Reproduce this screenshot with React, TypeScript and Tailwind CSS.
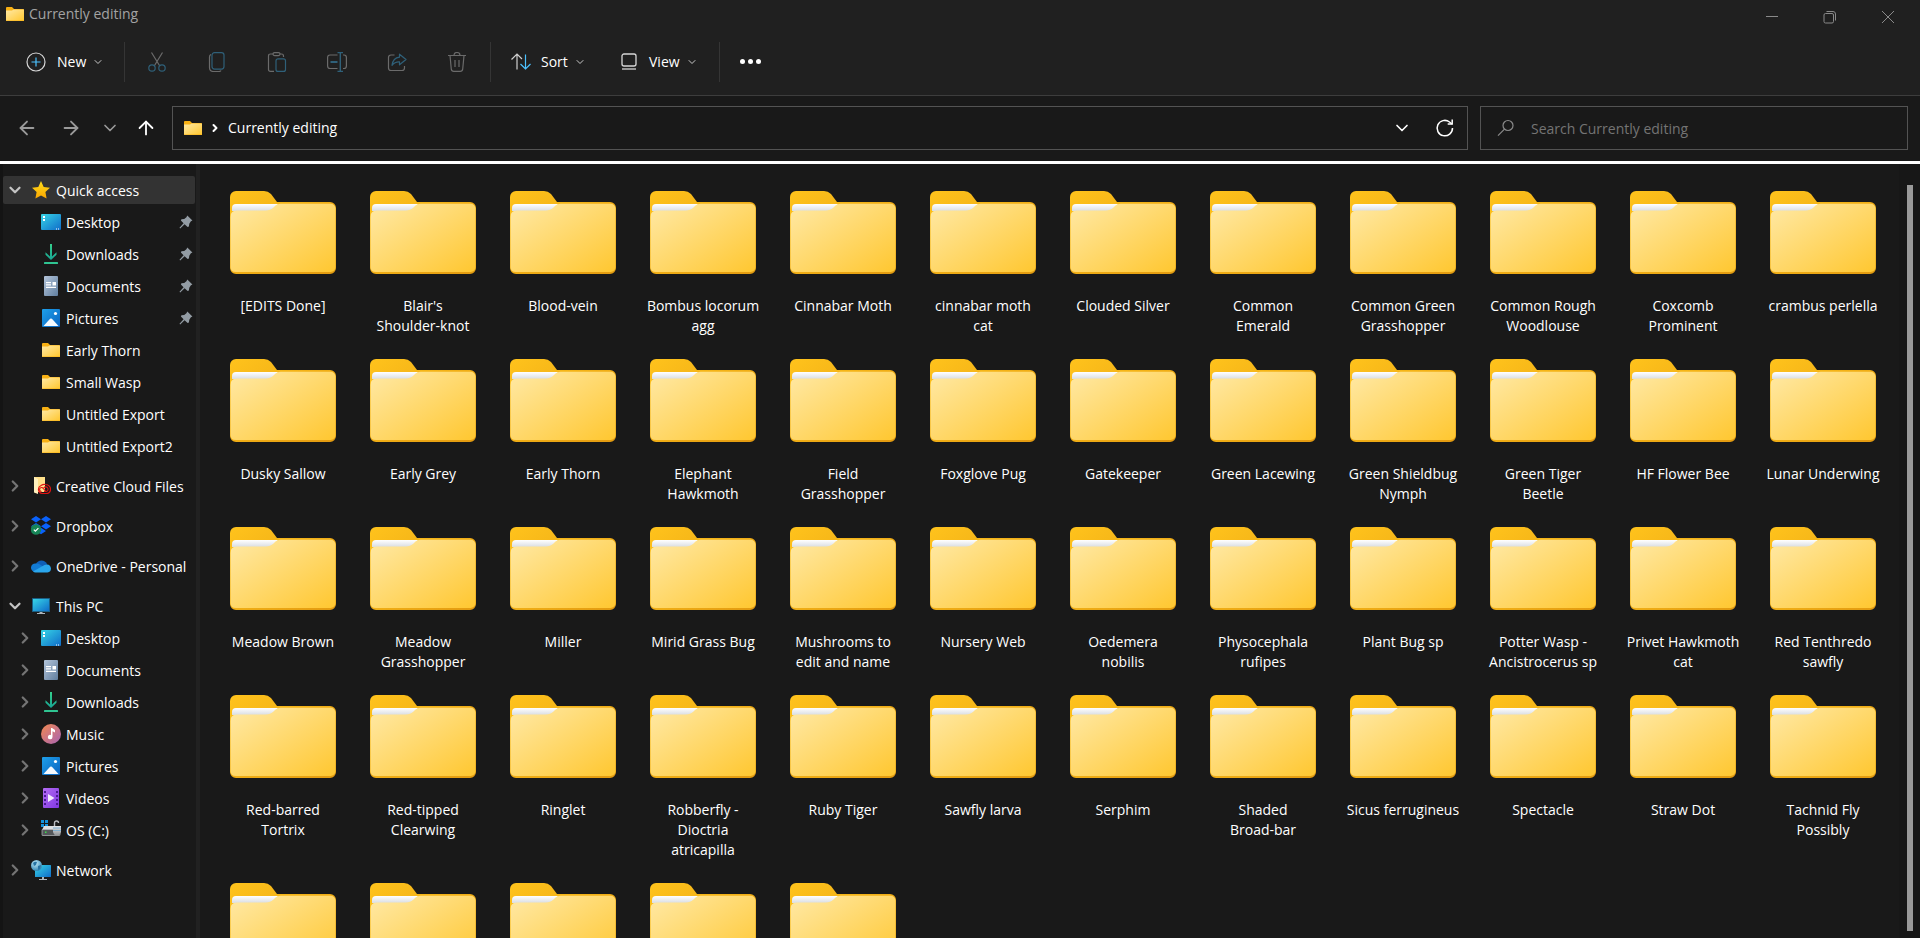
import {
  ArrowLeft,
  ArrowRight,
  ArrowUp,
  ChevronDown,
  ChevronRight,
} from "lucide-react";
import type { ReactNode } from "react";

const folders = [
  "[EDITS Done]",
  "Blair's Shoulder-knot",
  "Blood-vein",
  "Bombus locorum agg",
  "Cinnabar Moth",
  "cinnabar moth cat",
  "Clouded Silver",
  "Common Emerald",
  "Common Green Grasshopper",
  "Common Rough Woodlouse",
  "Coxcomb Prominent",
  "crambus perlella",
  "Dusky Sallow",
  "Early Grey",
  "Early Thorn",
  "Elephant Hawkmoth",
  "Field Grasshopper",
  "Foxglove Pug",
  "Gatekeeper",
  "Green Lacewing",
  "Green Shieldbug Nymph",
  "Green Tiger Beetle",
  "HF Flower Bee",
  "Lunar Underwing",
  "Meadow Brown",
  "Meadow Grasshopper",
  "Miller",
  "Mirid Grass Bug",
  "Mushrooms to edit and name",
  "Nursery Web",
  "Oedemera nobilis",
  "Physocephala rufipes",
  "Plant Bug sp",
  "Potter Wasp - Ancistrocerus sp",
  "Privet Hawkmoth cat",
  "Red Tenthredo sawfly",
  "Red-barred Tortrix",
  "Red-tipped Clearwing",
  "Ringlet",
  "Robberfly - Dioctria atricapilla",
  "Ruby Tiger",
  "Sawfly larva",
  "Serphim",
  "Shaded Broad-bar",
  "Sicus ferrugineus",
  "Spectacle",
  "Straw Dot",
  "Tachnid Fly Possibly",
  "",
  "",
  "",
  "",
  "",
];

/* ICONS */

function Gradients() {
  return (
    <svg className="absolute h-0 w-0" aria-hidden="true">
      <defs>
        <linearGradient id="folderFront" x1="0" y1="0" x2="1" y2="1">
          <stop offset="0" stopColor="#ffe9a6" />
          <stop offset="1" stopColor="#ffc730" />
        </linearGradient>
        <linearGradient id="folderBack" x1="0" y1="0" x2="1" y2="1">
          <stop offset="0" stopColor="#ffc31c" />
          <stop offset="1" stopColor="#e29a10" />
        </linearGradient>
        <linearGradient id="paper" x1="0" y1="0" x2="0" y2="1">
          <stop offset="0" stopColor="#ffffff" />
          <stop offset="1" stopColor="#d9dde2" />
        </linearGradient>
        <linearGradient id="screen" x1="0" y1="0" x2="1" y2="1">
          <stop offset="0" stopColor="#37d5e6" />
          <stop offset="1" stopColor="#0f6cc9" />
        </linearGradient>
        <linearGradient id="picture" x1="0" y1="0" x2="1" y2="1">
          <stop offset="0" stopColor="#1ea0ea" />
          <stop offset="1" stopColor="#0a63c0" />
        </linearGradient>
        <linearGradient id="doc" x1="0" y1="0" x2="1" y2="1">
          <stop offset="0" stopColor="#b4c5da" />
          <stop offset="1" stopColor="#607e9f" />
        </linearGradient>
        <linearGradient id="music" x1="0" y1="0" x2="1" y2="1">
          <stop offset="0" stopColor="#f3894f" />
          <stop offset="1" stopColor="#a763b5" />
        </linearGradient>
        <linearGradient id="video" x1="0" y1="0" x2="1" y2="1">
          <stop offset="0" stopColor="#b46cf5" />
          <stop offset="1" stopColor="#8037e0" />
        </linearGradient>
        <linearGradient id="download" x1="0" y1="0" x2="0" y2="1">
          <stop offset="0" stopColor="#35cf8c" />
          <stop offset="1" stopColor="#17a695" />
        </linearGradient>
        <linearGradient id="star" x1="0" y1="0" x2="0" y2="1">
          <stop offset="0" stopColor="#ffdc1a" />
          <stop offset="1" stopColor="#f9a602" />
        </linearGradient>
        <linearGradient id="drive" x1="0" y1="0" x2="0" y2="1">
          <stop offset="0" stopColor="#e4e6e8" />
          <stop offset="1" stopColor="#8a8d90" />
        </linearGradient>
        <radialGradient id="globe" cx="0.4" cy="0.3" r="0.7">
          <stop offset="0" stopColor="#c4ecf8" />
          <stop offset="1" stopColor="#3286b4" />
        </radialGradient>
      </defs>
    </svg>
  );
}

function BigFolder() {
  return (
    <svg width="106" height="84" viewBox="0 0 106 84" aria-hidden="true">
      <path
        d="M0 6a6 6 0 0 1 6-6h28q4 0 7 3l6 8h53a6 6 0 0 1 6 6V77a6 6 0 0 1-6 6H6a6 6 0 0 1-6-6Z"
        fill="url(#folderBack)"
      />
      <path d="M2 17a4 4 0 0 1 4-4h42l-5 7H2Z" fill="url(#paper)" />
      <path
        d="M.5 26q0-6.500 6-6.500h29q5 0 8-3l2-2q2-1.700 5-1.700h50a5 5 0 0 1 5 5V76a5 5 0 0 1-5 5H6q-5.500 0-5.500-5Z"
        fill="url(#folderFront)"
      />
    </svg>
  );
}

function FolderIcon() {
  return (
    <svg width="20" height="20" viewBox="0 0 20 20" aria-hidden="true">
      <path d="M1 4a1 1 0 0 1 1-1h5l2 2h9a1 1 0 0 1 1 1v11H1Z" fill="#f8b013" />
      <path d="M1 6.500h6L8.500 5.500H19V16a.6.6 0 0 1-.6.6H1.600A.6.600 0 0 1 1 16Z" fill="url(#folderFront)" />
    </svg>
  );
}

function StarIcon() {
  return (
    <svg width="20" height="20" viewBox="0 0 20 20" aria-hidden="true">
      <path
        d="m10 1 2.700 5.900 6.300.8-4.600 4.400 1.200 6.400L10 15.400l-5.600 3.100 1.200-6.400L1 7.700l6.300-.8Z"
        fill="url(#star)"
      />
    </svg>
  );
}

function DesktopIcon() {
  return (
    <svg width="20" height="20" viewBox="0 0 20 20" aria-hidden="true">
      <rect y="2" width="20" height="16" rx="1" fill="url(#screen)" />
      <path d="M2 4h2v2H2zM2 7h2v2H2zM15 16.500h1v1h-1zM17 16.500h1v1h-1z" fill="#fff" />
    </svg>
  );
}

function DownloadIcon() {
  return (
    <svg width="20" height="20" viewBox="0 0 20 20" fill="none" aria-hidden="true">
      <path d="M9 0h2v12.500l4.500-4.300v2.600L10 16l-5.500-5.200V8.200L9 12.500Z" fill="url(#download)" />
      <rect x="3" y="18" width="14" height="2" rx="0.500" fill="#2fc491" />
    </svg>
  );
}

function DocumentIcon() {
  return (
    <svg width="20" height="20" viewBox="0 0 20 20" aria-hidden="true">
      <rect x="3" width="14" height="20" rx="1" fill="url(#doc)" />
      <path d="M5 6h5v1.200H5zM5 8.300h5v1.200H5zM11.500 6H15v3.500h-3.500zM5 10.700h10v1.200H5z" fill="#fff" />
    </svg>
  );
}

function PictureIcon() {
  return (
    <svg width="20" height="20" viewBox="0 0 20 20" aria-hidden="true">
      <rect x="1" y="1" width="18" height="18" rx="1" fill="url(#picture)" />
      <path d="m2.500 18 6.600-7.200q.9-.8 1.800 0L17.500 18Z" fill="#f4f9fe" />
      <circle cx="14.500" cy="5.500" r="1.600" fill="#fff" />
    </svg>
  );
}

function MusicIcon() {
  return (
    <svg width="20" height="20" viewBox="0 0 20 20" aria-hidden="true">
      <circle cx="10" cy="10" r="10" fill="url(#music)" />
      <path d="M10 4h1l3 2v2.500l-2.500-1.300V13a2.300 2.200 0 1 1-1.500-2Z" fill="#fff" />
    </svg>
  );
}

function VideoIcon() {
  return (
    <svg width="20" height="20" viewBox="0 0 20 20" aria-hidden="true">
      <rect x="2" width="16" height="20" rx="1" fill="url(#video)" />
      <path
        d="M3 3h2v2H3zM3 7h2v2H3zM3 11h2v2H3zM3 15h2v2H3zM15 3h2v2h-2zM15 7h2v2h-2zM15 11h2v2h-2zM15 15h2v2h-2z"
        fill="#4b1a94"
      />
      <path d="M7 6v8l6.500-4Z" fill="#f3eafd" />
    </svg>
  );
}

function DriveIcon() {
  return (
    <svg width="20" height="20" viewBox="0 0 20 20" aria-hidden="true">
      <path d="M0 0h3v3H0zM4 0h3v3H4zM0 4h3v3H0zM4 4h3v3H4z" fill="#1593dc" />
      <path d="M3 6h13l3 4H1Z" fill="#dcdfe1" />
      <rect x="1" y="9.500" width="18" height="6" rx="0.500" fill="#54575a" stroke="#b9bcbf" strokeWidth="0.700" />
      <rect x="4" y="11.500" width="1.500" height="1.500" fill="#37e04a" />
      <path d="M13.500 7V3a2 2 0 0 1 4 0" fill="none" stroke="#b9bcc0" strokeWidth="1.400" />
      <path d="M12 6h8v6q-1 3.500-4 4-3-.5-4-4Z" fill="url(#drive)" />
      <path d="M12 8h8M12 10.500h8" stroke="#6fa9d2" strokeWidth="0.800" />
    </svg>
  );
}

function CreativeCloudIcon() {
  return (
    <svg width="20" height="20" viewBox="0 0 20 20" fill="none" aria-hidden="true">
      <path d="M3 1h11v15H3Z" fill="#ffe08a" />
      <path d="M3 1l4 2v15l-4-1.500Z" fill="#fff0bd" />
      <path
        d="M11 17.500a4.200 4.200 0 0 1-1-8q2-1.200 4-1 5.500.3 5.500 4.700 0 4.300-4.500 4.300Z"
        stroke="#e01212"
        strokeWidth="1.200"
      />
      <path
        d="M10.500 15.500a2 2 0 1 1 1.700-3.200l2.300 2.500M13 15.500h2a2.300 2.300 0 1 0-2.200-3.500"
        stroke="#e01212"
        strokeWidth="1.100"
      />
    </svg>
  );
}

function DropboxIcon() {
  return (
    <svg width="20" height="20" viewBox="0 0 20 20" aria-hidden="true">
      <path
        d="m5 0 5 3.300-5 3.300L0 3.300ZM15 0l5 3.300-5 3.300-5-3.300ZM5 7l5 3.300-5 3.300-5-3.300ZM15 7l5 3.300-5 3.300-5-3.300ZM10 11.700l5 3.200-5 3.300-5-3.300Z"
        fill="#0a62fb"
      />
      <circle cx="5" cy="13.500" r="5.200" fill="#178557" />
      <path d="m2.800 13.600 1.600 1.600 3-3" fill="none" stroke="#fff" strokeWidth="1.200" />
    </svg>
  );
}

function OneDriveIcon() {
  return (
    <svg width="20" height="20" viewBox="0 0 20 20" aria-hidden="true">
      <path d="M5 8a6 6 0 0 1 11 0l-1 6H5Z" fill="#0f5fb8" />
      <path d="M4.500 7.500q2.500-.5 4.500 1l6 4-9 3.500H4a4.200 4.200 0 0 1 .5-8.500Z" fill="#127bd4" />
      <path d="M2 15.500 13.500 9q5.500-2 6.500 3.500 0 3.500-3.500 4H4.500q-1.500 0-2.500-1Z" fill="#2aa6ec" />
    </svg>
  );
}

function ThisPcIcon() {
  return (
    <svg width="20" height="20" viewBox="0 0 20 20" aria-hidden="true">
      <rect x="1" y="2" width="18" height="14" rx="0.500" fill="#1b5f85" />
      <rect x="2" y="3" width="16" height="12" fill="url(#screen)" />
      <path d="M8.500 16h3v1H14v1H6v-1h2.500Z" fill="#aeb6bd" />
    </svg>
  );
}

function NetworkIcon() {
  return (
    <svg width="20" height="20" viewBox="0 0 20 20" aria-hidden="true">
      <rect x="4" y="5" width="16" height="12" rx="0.500" fill="url(#screen)" />
      <path d="M11 17h2v2h3v1H8v-1h3Z" fill="#aeb6bd" />
      <circle cx="5.500" cy="5.500" r="5.500" fill="url(#globe)" />
      <path d="M2 3q2-2 4-1L5 5 3 6ZM7 6l3-1-1 4-2 1Z" fill="#2673a3" />
    </svg>
  );
}

function PinIcon() {
  return (
    <svg width="14" height="14" viewBox="0 0 14 14" aria-hidden="true">
      <path
        d="M8.300.6 13.400 5.400 11.900 6.300 10.300 8.700 9.900 11.500 8.600 12 5.600 9.200 1.200 13.400.5 12.800 4.600 8.200 1.900 5.500 2.400 4.300 5.200 3.900 7.400 2.200Z"
        fill="#939ca4"
      />
    </svg>
  );
}

/* SIDEBAR */

type TreeItem = {
  label: string;
  icon: ReactNode;
  child?: boolean;
  state?: "open" | "closed";
  pinned?: boolean;
  active?: boolean;
};

const treeGroups: TreeItem[][] = [
  [
    { label: "Quick access", icon: <StarIcon />, state: "open", active: true },
    { label: "Desktop", icon: <DesktopIcon />, child: true, pinned: true },
    { label: "Downloads", icon: <DownloadIcon />, child: true, pinned: true },
    { label: "Documents", icon: <DocumentIcon />, child: true, pinned: true },
    { label: "Pictures", icon: <PictureIcon />, child: true, pinned: true },
    { label: "Early Thorn", icon: <FolderIcon />, child: true },
    { label: "Small Wasp", icon: <FolderIcon />, child: true },
    { label: "Untitled Export", icon: <FolderIcon />, child: true },
    { label: "Untitled Export2", icon: <FolderIcon />, child: true },
  ],
  [{ label: "Creative Cloud Files", icon: <CreativeCloudIcon />, state: "closed" }],
  [{ label: "Dropbox", icon: <DropboxIcon />, state: "closed" }],
  [{ label: "OneDrive - Personal", icon: <OneDriveIcon />, state: "closed" }],
  [
    { label: "This PC", icon: <ThisPcIcon />, state: "open" },
    { label: "Desktop", icon: <DesktopIcon />, child: true, state: "closed" },
    { label: "Documents", icon: <DocumentIcon />, child: true, state: "closed" },
    { label: "Downloads", icon: <DownloadIcon />, child: true, state: "closed" },
    { label: "Music", icon: <MusicIcon />, child: true, state: "closed" },
    { label: "Pictures", icon: <PictureIcon />, child: true, state: "closed" },
    { label: "Videos", icon: <VideoIcon />, child: true, state: "closed" },
    { label: "OS (C:)", icon: <DriveIcon />, child: true, state: "closed" },
  ],
  [{ label: "Network", icon: <NetworkIcon />, state: "closed" }],
];

function TreeRow({ item }: { item: TreeItem }) {
  return (
    <button
      type="button"
      className={`flex h-7 w-full items-center text-left whitespace-nowrap ${
        item.child ? "pl-3" : "pl-0.5"
      } ${item.active ? "rounded-xs bg-[#333333]" : ""}`}
    >
      <span className="mr-1.5 flex w-5 shrink-0 justify-center">
        {item.state === "open" && <ChevronDown size={18} strokeWidth={3} className="text-[#c4c4c4]" />}
        {item.state === "closed" && <ChevronRight size={18} strokeWidth={3} className="text-[#747474]" />}
      </span>
      <span className="mr-[5px] shrink-0">{item.icon}</span>
      <span className="flex-1 pt-0.5">{item.label}</span>
      {item.pinned && (
        <span className="mr-0.5">
          <PinIcon />
        </span>
      )}
    </button>
  );
}

/* TOOLBAR */

function ToolButton({ label, children }: { label: string; children: ReactNode }) {
  return (
    <button type="button" aria-label={label} className="flex h-10 w-[60px] items-center justify-center">
      <svg width="20" height="20" viewBox="0 0 20 20" fill="none" strokeWidth="1.200" stroke="#6b6b6b">
        {children}
      </svg>
    </button>
  );
}

function Divider() {
  return <div className="h-10 w-px bg-[#353535]" />;
}

function Toolbar() {
  return (
    <div className="flex h-[67px] items-center pl-[26px] text-white">
      <button type="button" className="flex w-[98px] items-center gap-[11px]">
        <svg width="20" height="20" viewBox="0 0 20 20" fill="none" strokeWidth="1.200">
          <circle cx="10" cy="10" r="9" stroke="#d6d6d6" />
          <path d="M10 5.500v9M5.500 10h9" stroke="#4cc2ff" />
        </svg>
        <span className="flex items-center gap-1.5">
          New
          <ChevronDown size={12} className="text-[#c8c8c8]" />
        </span>
      </button>
      <Divider />
      <div className="flex pr-[3px] pl-[2px]">
        <ToolButton label="Cut">
          <path d="M4.500.5 12.800 14M15.500.5 7.200 14" />
          <g stroke="#2f6079">
            <circle cx="5" cy="16" r="3.200" />
            <circle cx="15" cy="16" r="3.200" />
          </g>
        </ToolButton>
        <ToolButton label="Copy">
          <path d="M4 2.500Q2.500 3 2.500 5v10.500q0 4 4 4H12q1.500 0 2-1" />
          <rect x="5" y="0.600" width="12" height="16.500" rx="2.500" stroke="#2f6079" />
        </ToolButton>
        <ToolButton label="Paste">
          <path d="M7 19.400H3.500q-2 0-2-2V4q0-2 2-2H6M13 2h1.500q2 0 2 2v1" />
          <rect x="6" y="0.600" width="7" height="3" rx="1.500" />
          <rect x="9" y="6.800" width="9.500" height="12.600" rx="2" stroke="#2f6079" />
        </ToolButton>
        <ToolButton label="Rename">
          <path d="M10.500 3H3Q.6 3 .6 5.500v8.500q0 2.500 2.500 2.500h7.400M16 3h1q2.400 0 2.400 2.500v8.500q0 2.500-2.400 2.500h-1" />
          <path d="M10.500.6h5.500M10.500 19.400h5.500M13.300.6v18.800" stroke="#2f6079" strokeWidth="1.400" />
          <path d="M3.500 10h7" stroke="#2f6079" strokeWidth="2" />
        </ToolButton>
        <ToolButton label="Share">
          <path d="M7.500 3H4Q1.500 3 1.500 5.500v10.500q0 2.500 2.500 2.500h11q2.500 0 2.500-2.500v-2" />
          <path
            d="M12.500 2.200 19 7.500l-6.500 5.300V9.800q-4.500-.3-7.500 3.500Q6 6 12.500 5.200Z"
            stroke="#2f6079"
            strokeLinejoin="round"
          />
        </ToolButton>
        <ToolButton label="Delete">
          <path d="M1 3.500h18M7 3.500q0-3 3-3t3 3M3 3.500l1.300 13.700q.3 2.200 2.400 2.200h6.600q2.100 0 2.400-2.200L17 3.500M8 8v7M12 8v7" />
        </ToolButton>
      </div>
      <Divider />
      <button type="button" className="ml-5 flex w-[108px] items-center gap-[10px]">
        <svg width="20" height="20" viewBox="0 0 20 20" fill="none" strokeWidth="1.200">
          <path d="M6 17.500V2.500M.5 7.500 6 2l5 5" stroke="#d0d0d0" />
          <path d="M14.500 2.500v15M9.500 12l5 5 5-5" stroke="#4cc2ff" />
        </svg>
        <span className="flex items-center gap-1.5">
          Sort
          <ChevronDown size={12} className="text-[#c8c8c8]" />
        </span>
      </button>
      <button type="button" className="flex w-[100px] items-center gap-[10px]">
        <svg width="20" height="20" viewBox="0 0 20 20" fill="none" strokeWidth="1.300" stroke="#d6d6d6">
          <rect x="3" y="2" width="14" height="12" rx="2" />
          <path d="M3 17h14" />
        </svg>
        <span className="flex items-center gap-1.5">
          View
          <ChevronDown size={12} className="text-[#c8c8c8]" />
        </span>
      </button>
      <Divider />
      <button type="button" aria-label="See more" className="ml-5 flex items-center gap-[3px]">
        <span className="h-[5px] w-[5px] rounded-full bg-white" />
        <span className="h-[5px] w-[5px] rounded-full bg-white" />
        <span className="h-[5px] w-[5px] rounded-full bg-white" />
      </button>
    </div>
  );
}

/* A name only wraps between words, never after a hyphen */
function FolderTile({ name }: { name: string }) {
  return (
    <div className="flex flex-col items-center gap-[21px]">
      <BigFolder />
      <p className="min-h-10 w-[114px] text-center">
        {name.split(" ").map((word, index) => (
          <span key={index}>
            {index > 0 && " "}
            <span className="whitespace-nowrap">{word}</span>
          </span>
        ))}
      </p>
    </div>
  );
}

export default function App() {
  return (
    <div className="flex h-screen flex-col overflow-hidden bg-[#191919] font-['Open_Sans','Noto_Sans',sans-serif] text-sm leading-5 text-white">
      <Gradients />

      {/* TITLE BAR */}
      <header className="border-b border-[#3d3d3d] bg-[#202020]">
        <div className="flex h-7 items-start justify-between">
          <div className="flex items-center gap-1 pt-1 pl-[5px] text-[#a3a3a3]">
            <FolderIcon />
            <h1>Currently editing</h1>
          </div>
          <div className="flex pt-[10px] pr-[3px]">
            <button type="button" aria-label="Minimize" className="flex w-[58px] justify-center">
              <svg width="14" height="14" viewBox="0 0 14 14" stroke="#8a8a8a">
                <path d="M1 6.500h12" />
              </svg>
            </button>
            <button type="button" aria-label="Restore" className="flex w-[58px] justify-center">
              <svg width="14" height="14" viewBox="0 0 14 14" fill="none" stroke="#8a8a8a">
                <rect x="1" y="3.500" width="9.500" height="9.500" rx="1.500" />
                <path d="M3.500 1.500H10q2.500 0 2.500 2.500v6.500" />
              </svg>
            </button>
            <button type="button" aria-label="Close" className="flex w-[58px] justify-center">
              <svg width="14" height="14" viewBox="0 0 14 14" stroke="#8a8a8a">
                <path d="m1 1 12 12M13 1 1 13" />
              </svg>
            </button>
          </div>
        </div>
        <Toolbar />
      </header>

      {/* ADDRESS BAR */}
      <div className="flex h-[65px] shrink-0 items-start pt-[10px] pr-3 pl-4">
        <nav className="flex h-11 w-[156px] items-center">
          <button type="button" aria-label="Back" className="w-11">
            <ArrowLeft size={22} strokeWidth={2} className="text-[#9a9a9a]" />
          </button>
          <button type="button" aria-label="Forward" className="w-10">
            <ArrowRight size={22} strokeWidth={2} className="text-[#9a9a9a]" />
          </button>
          <button type="button" aria-label="Recent locations" className="w-[35px]">
            <ChevronDown size={20} strokeWidth={2} className="text-[#9a9a9a]" />
          </button>
          <button type="button" aria-label="Up">
            <ArrowUp size={22} strokeWidth={2} />
          </button>
        </nav>
        <div className="flex h-11 flex-1 items-center border border-[#535353] pl-[10px]">
          <FolderIcon />
          <ChevronRight size={12} strokeWidth={4} className="mr-[7px] ml-[6px]" />
          <span className="flex-1">Currently editing</span>
          <button type="button" aria-label="Previous locations" className="mr-[23px]">
            <ChevronDown size={20} strokeWidth={2} />
          </button>
          <button type="button" aria-label="Refresh" className="mr-3">
            <svg width="20" height="20" viewBox="0 0 20 20" fill="none" stroke="#fff" strokeWidth="1.500">
              <path d="M17.500 10a7.700 7.700 0 1 1-3-6l2.500 2" />
              <path d="M17.200 1.500V6h-4.500" />
            </svg>
          </button>
        </div>
        <label className="ml-3 flex h-11 w-[428px] items-center border border-[#535353] pl-4 text-[#747474]">
          <svg width="18" height="18" viewBox="0 0 18 18" fill="none" stroke="#8a8a8a" strokeWidth="1.200">
            <circle cx="11" cy="6.500" r="5" />
            <path d="M7.500 10.200 1 16.700" />
          </svg>
          <input
            type="search"
            aria-label="Search Currently editing"
            placeholder="Search Currently editing"
            className="ml-4 flex-1 bg-transparent pt-0.5 outline-none placeholder:text-[#747474]"
          />
        </label>
      </div>
      <div className="h-[3px] shrink-0 bg-white" />

      <div className="flex min-h-0 flex-1">
        {/* NAVIGATION TREE */}
        <aside className="flex w-[200px] shrink-0 flex-col gap-3 border-r-4 border-l-3 border-r-[#212121] border-l-[#141414] pt-3 pr-px">
          {treeGroups.map((group, index) => (
            <div key={index} className="flex flex-col gap-1">
              {group.map((item) => (
                <TreeRow key={item.label} item={item} />
              ))}
            </div>
          ))}
        </aside>

        {/* FOLDER GRID */}
        <main className="grid flex-1 auto-rows-max grid-cols-[repeat(auto-fill,140px)] gap-y-[23px] overflow-hidden pt-[27px] pl-[13px]">
          {folders.map((name, index) => (
            <FolderTile key={index} name={name} />
          ))}
        </main>

        {/* SCROLLBAR */}
        <div className="flex w-[21px] bg-[#171717] pt-[21px] pb-[7px] pl-2">
          <div className="w-[6px] bg-[#9a9a9a]" />
        </div>
      </div>
    </div>
  );
}
